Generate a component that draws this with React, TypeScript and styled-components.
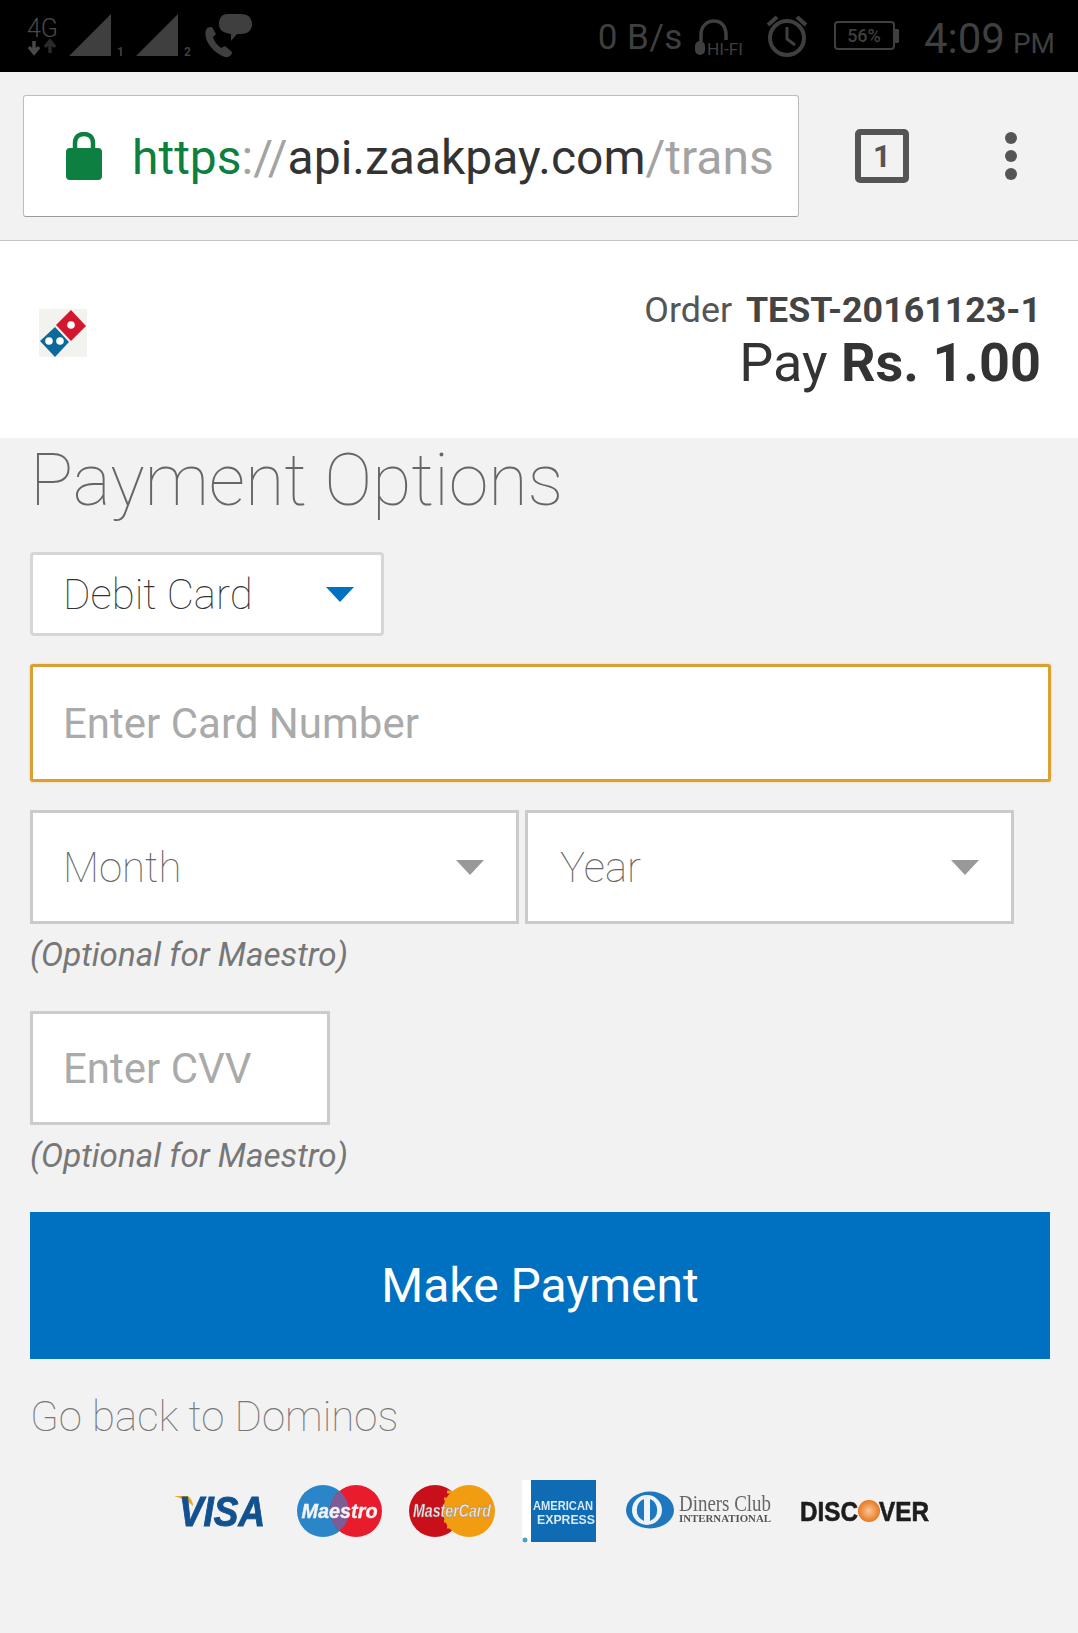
import React from 'react';
import styled, { createGlobalStyle } from 'styled-components';

const GlobalStyle = createGlobalStyle`
  html, body {
    margin: 0;
    padding: 0;
    background: #f2f2f2;
    font-family: Roboto, "Liberation Sans", sans-serif;
  }
  * {
    box-sizing: border-box;
  }
`;

const Page = styled.div`
  width: 1078px;
  height: 1633px;
  overflow: hidden;
  background: #f2f2f2;
`;

const StatusBar = styled.div`
  height: 72px;
  background: #000;
  color: #3f3f3f;
  display: flex;
  align-items: center;
  justify-content: space-between;
  padding: 0 23px 0 27px;
  svg {
    overflow: visible;
  }
`;

const StatusGroup = styled.div`
  display: flex;
  align-items: center;
`;

const NetSpeed = styled.span`
  font-size: 35px;
  letter-spacing: 0.5px;
  margin: 3px 12px 0 0;
`;

const Clock = styled.span`
  font-size: 42px;
  margin: 4px 0 0 24px;
  white-space: nowrap;
  > small {
    font-size: 28px;
    margin-left: 8px;
  }
`;

const Toolbar = styled.div`
  height: 169px;
  padding-top: 23px;
  border-bottom: 1px solid #c4c4c4;
  display: flex;
  align-items: flex-start;
`;

const UrlBox = styled.div`
  width: 776px;
  height: 122px;
  margin-left: 23px;
  background: #fff;
  border: 1px solid #bdbdbd;
  border-bottom-color: #9a9a9a;
  border-radius: 3px;
  display: flex;
  align-items: center;
  padding-left: 42px;
  font-size: 48px;
  white-space: nowrap;
  overflow: hidden;
`;

const UrlText = styled.span`
  margin: 3px 0 0 30px;
`;

const UrlPart = styled.span<{ $color: string }>`
  color: ${p => p.$color};
`;

const TabButton = styled.div`
  width: 54px;
  height: 54px;
  margin: 34px 0 0 56px;
  border: 6px solid #555;
  border-radius: 5px;
  color: #555;
  font-size: 31px;
  font-weight: 700;
  display: flex;
  align-items: center;
  justify-content: center;
`;

const MenuDots = styled.div`
  margin: 37px 0 0 96px;
  display: flex;
  flex-direction: column;
  gap: 6px;
  > i {
    display: block;
    width: 12px;
    height: 12px;
    border-radius: 50%;
    background: #555;
  }
`;

const MerchantHeader = styled.div`
  height: 197px;
  background: #fff;
  display: flex;
  align-items: flex-start;
  justify-content: space-between;
  padding: 68px 37px 0 39px;
`;

const OrderBlock = styled.div`
  text-align: right;
  color: #333;
  margin-top: -22px;
`;

const OrderLine = styled.div`
  font-size: 35.8px;
  line-height: 46px;
  color: #555;
  > b {
    color: #444;
    margin-left: 5px;
  }
`;

const PayLine = styled.div`
  font-size: 54px;
  line-height: 60px;
`;

const Main = styled.div`
  padding: 0 28px 0 30px;
`;

const Title = styled.h1`
  margin: 0 0 30px;
  height: 84px;
  line-height: 86px;
  font-size: 72px;
  font-weight: 100;
  letter-spacing: -0.1px;
  color: #666;
`;

const SelectBox = styled.div<{ $width: number; $height: number; $rounded?: boolean }>`
  width: ${p => p.$width}px;
  height: ${p => p.$height}px;
  background: #fff;
  border: 3px solid ${p => (p.$rounded ? '#d6d6d6' : '#cbcbcb')};
  border-radius: ${p => (p.$rounded ? '4px' : '0')};
  display: flex;
  align-items: center;
  justify-content: space-between;
  padding: 0 ${p => (p.$rounded ? 27 : 32)}px 0 ${p => (p.$rounded ? 30 : 32)}px;
  font-size: 42px;
  font-weight: 100;
  color: ${p => (p.$rounded ? '#333' : '#666')};
`;

const ExpiryBox = styled(SelectBox)`
  padding-left: 30px;
`;

const YearBox = styled(SelectBox)`
  padding-left: 32px;
`;

const Caret = styled.span<{ $color: string }>`
  width: 0;
  height: 0;
  border-left: 14px solid transparent;
  border-right: 14px solid transparent;
  border-top: 15px solid ${p => p.$color};
`;

const TextField = styled.div<{ $width: number; $height: number; $focused?: boolean }>`
  width: ${p => p.$width}px;
  height: ${p => p.$height}px;
  background: #fff;
  border: 3px solid ${p => (p.$focused ? '#dba034' : '#cbcbcb')};
  border-radius: ${p => (p.$focused ? '3px' : '0')};
  box-shadow: ${p => (p.$focused ? '0 0 2px #f0c26a' : 'none')};
  display: flex;
  align-items: center;
  padding-left: 30px;
  font-size: 42px;
  color: #aaa;
`;

const CardField = styled(TextField)`
  margin: 28px 0;
`;

const ExpiryRow = styled.div`
  display: flex;
  gap: 6px;
`;

const Hint = styled.div`
  height: 62px;
  line-height: 62px;
  margin-bottom: 25px;
  font-size: 33.2px;
  font-style: italic;
  color: #777;
`;

const PayButton = styled.div`
  height: 147px;
  margin-top: 2px;
  background: #0070c0;
  color: #fff;
  font-size: 48px;
  display: flex;
  align-items: center;
  justify-content: center;
`;

const BackLink = styled.div`
  height: 64px;
  line-height: 64px;
  margin-top: 26px;
  font-size: 42px;
  font-weight: 100;
  color: #777;
`;

const CardLogos = styled.div`
  display: flex;
  align-items: center;
  gap: 27px;
  height: 70px;
  margin-top: 27px;
  padding-left: 174px;
  > svg {
    filter: blur(0.6px);
    flex: none;
    overflow: visible;
  }
`;

const DominosLogo = () => (
  <svg width="48" height="48" viewBox="0 0 48 48">
    <rect width="48" height="48" fill="#f2f2ee" />
    <polygon points="32,1 47,17 32,32 17,16" fill="#d3172f" />
    <polygon points="16,18 30,33 16,48 1,32" fill="#0b6a9b" />
    <circle cx="32" cy="16" r="3.8" fill="#fff" />
    <circle cx="10" cy="32" r="3.8" fill="#fff" />
    <circle cx="21" cy="32" r="3.8" fill="#fff" />
  </svg>
);

const Visa = () => (
  <svg width="96" height="40" viewBox="0 0 96 40">
    <path d="M0 5 L14 5 C18 8 19 12 19 15 C14 10 7 7 0 5Z" fill="#eaa81f" />
    <text x="5" y="35" fontFamily="Liberation Sans" fontStyle="italic" fontWeight="700" fontSize="43" fill="#12518f" stroke="#12518f" strokeWidth="1" textLength="86" lengthAdjust="spacingAndGlyphs">VISA</text>
  </svg>
);

const Maestro = () => (
  <svg width="85" height="52" viewBox="0 0 85 52">
    <circle cx="26" cy="26" r="26" fill="#2b86c9" />
    <circle cx="59" cy="26" r="26" fill="#e91c2e" />
    <path d="M42.5 6 A26 26 0 0 1 42.5 46 A26 26 0 0 1 42.5 6Z" fill="#7c5c96" />
    <text x="42.5" y="33" textAnchor="middle" fontFamily="Liberation Sans" fontStyle="italic" fontWeight="700" fontSize="21" fill="#f2f2f2" stroke="#f2f2f2" strokeWidth="0.4" textLength="76" lengthAdjust="spacingAndGlyphs">Maestro</text>
  </svg>
);

const MasterCard = () => (
  <svg width="86" height="52" viewBox="0 0 86 52">
    <circle cx="26" cy="26" r="26" fill="#c9101a" />
    <circle cx="60" cy="26" r="26" fill="#f29c12" />
    <path d="M43 7 H38 M43 14 H35 M43 21 H34 M43 36 H35 M43 42 H38" stroke="#f29c12" strokeWidth="3" />
    <text x="43" y="32" textAnchor="middle" fontFamily="Liberation Sans" fontStyle="italic" fontWeight="700" fontSize="19" fill="#e4e4e8" stroke="#777" strokeWidth="0.3" textLength="78" lengthAdjust="spacingAndGlyphs">MasterCard</text>
  </svg>
);

const Amex = () => (
  <svg width="77" height="63" viewBox="0 0 77 63">
    <rect x="0" width="10" height="63" fill="#fff" />
    <rect x="9" width="65" height="62" fill="#0f6cb4" />
    <circle cx="3" cy="60" r="2.5" fill="#4aa0c8" />
    <text x="41" y="30" textAnchor="middle" fontFamily="Liberation Sans" fontSize="13" fontWeight="700" fill="#d8e8f4" textLength="60" lengthAdjust="spacingAndGlyphs">AMERICAN</text>
    <text x="44" y="44" textAnchor="middle" fontFamily="Liberation Sans" fontSize="13" fontWeight="700" fill="#d8e8f4" textLength="58" lengthAdjust="spacingAndGlyphs">EXPRESS</text>
  </svg>
);

const Diners = () => (
  <svg width="147" height="40" viewBox="0 0 147 40">
    <ellipse cx="24" cy="19" rx="24" ry="18.5" fill="#1f78bd" />
    <circle cx="21" cy="19" r="15" fill="#eef3f7" />
    <path d="M18 8 A12 12 0 0 0 18 30Z" fill="#1f78bd" />
    <path d="M24 8 A12 12 0 0 1 24 30Z" fill="#1f78bd" />
    <text x="53" y="20" fontFamily="Liberation Serif" fontSize="24" fill="#666" textLength="92" lengthAdjust="spacingAndGlyphs">Diners Club</text>
    <text x="53" y="31" fontFamily="Liberation Serif" fontSize="10" fontWeight="700" fill="#555" textLength="92" lengthAdjust="spacingAndGlyphs">INTERNATIONAL</text>
  </svg>
);

const Discover = () => (
  <svg width="132" height="26" viewBox="0 0 132 26">
    <defs>
      <radialGradient id="discoverDot">
        <stop offset="0" stopColor="#f9c79a" />
        <stop offset="1" stopColor="#e8771f" />
      </radialGradient>
    </defs>
    <text x="0" y="23" fontFamily="Liberation Sans" fontSize="28" fontWeight="700" fill="#1d1d1d" stroke="#1d1d1d" strokeWidth="0.6" textLength="58" lengthAdjust="spacingAndGlyphs">DISC</text>
    <circle cx="69" cy="13" r="11" fill="url(#discoverDot)" />
    <text x="79" y="23" fontFamily="Liberation Sans" fontSize="28" fontWeight="700" fill="#1d1d1d" stroke="#1d1d1d" strokeWidth="0.6" textLength="50" lengthAdjust="spacingAndGlyphs">VER</text>
  </svg>
);

const SignalIcon = ({ label }: { label: string }) => (
  <svg width="57" height="44" viewBox="0 0 57 44" style={{ marginRight: 10 }}>
    <polygon points="0,42 42,0 42,42" fill="#3f3f3f" />
    <text x="48" y="42" fontFamily="Roboto" fontWeight="700" fontSize="12" fill="#3f3f3f">{label}</text>
  </svg>
);

const LeftIcons = () => (
  <StatusGroup>
    <svg width="42" height="44" viewBox="0 0 42 44" style={{ margin: '2px 0 0 0' }}>
      <text x="0" y="22" fontFamily="Roboto" fontWeight="300" fontSize="25" fill="#4a4a4a" textLength="31" lengthAdjust="spacingAndGlyphs">4G</text>
      <path d="M7 26v9M2 32l5 6 5-6" stroke="#4a4a4a" strokeWidth="3.5" fill="none" />
      <path d="M23 38v-9M18 32l5-6 5 6" stroke="#2a2a2a" strokeWidth="3.5" fill="none" />
    </svg>
    <SignalIcon label="1" />
    <SignalIcon label="2" />
    <svg width="50" height="44" viewBox="0 0 50 44">
      <path d="M3 16 C0 24 8 38 22 43 C26 44 29 41 29 38 L22 32 L18 34 C14 31 11 27 10 23 L13 20 L9 13 C7 13 4 13 3 16Z" fill="#3f3f3f" />
      <path d="M24 0 H38 C45 0 49 4 49 10 C49 16 45 20 38 20 H34 L28 27 V20 C20 19 16 16 16 10 C16 4 19 0 24 0Z" fill="#3f3f3f" />
    </svg>
  </StatusGroup>
);

const RightIcons = () => (
  <StatusGroup>
    <NetSpeed>0 B/s</NetSpeed>
    <svg width="49" height="44" viewBox="0 0 49 44" style={{ marginRight: 22 }}>
      <path d="M6 28 V21 C6 12 12 7 19 7 C26 7 31 12 31 21 V26" stroke="#3f3f3f" strokeWidth="3.5" fill="none" />
      <rect x="0" y="27" width="10" height="14" rx="5" fill="#3f3f3f" />
      <text x="12" y="41" fontFamily="Roboto" fontSize="17" fill="#3f3f3f" textLength="36" lengthAdjust="spacingAndGlyphs">HI-FI</text>
    </svg>
    <svg width="42" height="44" viewBox="0 0 42 44" style={{ marginRight: 26 }}>
      <circle cx="21" cy="24" r="17" stroke="#3f3f3f" strokeWidth="4" fill="none" />
      <path d="M21 13 V25 L29 31" stroke="#3f3f3f" strokeWidth="3" fill="none" />
      <path d="M2 11 L11 3 M40 11 L31 3" stroke="#3f3f3f" strokeWidth="4" fill="none" />
    </svg>
    <svg width="66" height="30" viewBox="0 0 66 30">
      <rect x="1" y="1" width="59" height="27" rx="3" stroke="#3f3f3f" strokeWidth="2" fill="none" />
      <rect x="60" y="8" width="5" height="14" rx="1" fill="#3f3f3f" />
      <text x="30" y="21" textAnchor="middle" fontFamily="Roboto" fontWeight="500" fontSize="18" fill="#3f3f3f">56%</text>
    </svg>
    <Clock>
      4:09<small>PM</small>
    </Clock>
  </StatusGroup>
);

function App() {
  return (
    <Page>
      <GlobalStyle />
      <StatusBar>
        <LeftIcons />
        <RightIcons />
      </StatusBar>
      <Toolbar>
        <UrlBox>
          <svg width="36" height="48" viewBox="0 0 36 48">
            <path d="M9 18 V11 C9 5 13 2 18 2 C23 2 27 5 27 11 V18" stroke="#0d7f40" strokeWidth="4.5" fill="none" />
            <rect x="0" y="16" width="36" height="32" rx="4" fill="#0d7f40" />
          </svg>
          <UrlText>
            <UrlPart $color="#0d7f40">https</UrlPart>
            <UrlPart $color="#a3a3a3">://</UrlPart>
            <UrlPart $color="#333">api.zaakpay.com</UrlPart>
            <UrlPart $color="#a3a3a3">/trans</UrlPart>
          </UrlText>
        </UrlBox>
        <TabButton>1</TabButton>
        <MenuDots>
          <i />
          <i />
          <i />
        </MenuDots>
      </Toolbar>
      <MerchantHeader>
        <DominosLogo />
        <OrderBlock>
          <OrderLine>
            Order <b>TEST-20161123-1</b>
          </OrderLine>
          <PayLine>
            Pay <b>Rs. 1.00</b>
          </PayLine>
        </OrderBlock>
      </MerchantHeader>
      <Main>
        <Title>Payment Options</Title>
        <SelectBox $width={354} $height={84} $rounded>
          Debit Card
          <Caret $color="#0070c0" />
        </SelectBox>
        <CardField $width={1021} $height={118} $focused>
          Enter Card Number
        </CardField>
        <ExpiryRow>
          <ExpiryBox $width={489} $height={114}>
            Month
            <Caret $color="#999" />
          </ExpiryBox>
          <YearBox $width={489} $height={114}>
            Year
            <Caret $color="#999" />
          </YearBox>
        </ExpiryRow>
        <Hint>(Optional for Maestro)</Hint>
        <TextField $width={300} $height={114}>
          Enter CVV
        </TextField>
        <Hint>(Optional for Maestro)</Hint>
        <PayButton>Make Payment</PayButton>
        <BackLink>Go back to Dominos</BackLink>
      </Main>
      <CardLogos>
        <Visa />
        <Maestro />
        <MasterCard />
        <Amex />
        <Diners />
        <Discover />
      </CardLogos>
    </Page>
  );
}

export default App;
